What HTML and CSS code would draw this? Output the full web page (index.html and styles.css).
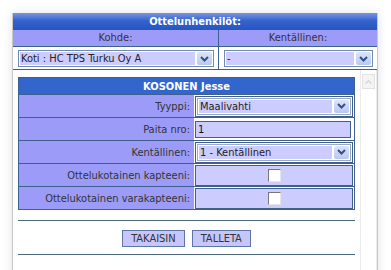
FILE: index.html
```html
<!DOCTYPE html>
<html lang="fi">
<head>
    <meta charset="UTF-8">
    <meta name="viewport" content="width=device-width, initial-scale=1.0">
    <title>Ottelunhenkilöt</title>
    <link rel="stylesheet" href="styles.css">
</head>
<body>
    <div class="window">
        <!-- Kohde ja kentällinen -->
        <div class="top">
            <div class="title">Ottelunhenkilöt:</div>
            <div class="cols labels">
                <div class="col-label sep">Kohde:</div>
                <div class="col-label">Kentällinen:</div>
            </div>
            <div class="cols picks">
                <div class="pick sep">
                    <div class="select">
                        <span class="value">Koti : HC TPS Turku Oy A</span>
                        <span class="arrow"><svg width="9" height="6" viewBox="0 0 9 6"><path d="M1 1 L4.5 4.5 L8 1" fill="none" stroke="#33508a" stroke-width="2"/></svg></span>
                    </div>
                </div>
                <div class="pick">
                    <div class="select">
                        <span class="value">-</span>
                        <span class="arrow"><svg width="9" height="6" viewBox="0 0 9 6"><path d="M1 1 L4.5 4.5 L8 1" fill="none" stroke="#33508a" stroke-width="2"/></svg></span>
                    </div>
                </div>
            </div>
        </div>

        <!-- Pelaajan tiedot -->
        <div class="frame">
            <div class="content">
                <table class="player">
                    <tr><th colspan="2">KOSONEN Jesse</th></tr>
                    <tr>
                        <td class="label">Tyyppi:</td>
                        <td class="value">
                            <div class="boxed">
                                <div class="select">
                                    <span class="value">Maalivahti</span>
                                    <span class="arrow"><svg width="9" height="6" viewBox="0 0 9 6"><path d="M1 1 L4.5 4.5 L8 1" fill="none" stroke="#33508a" stroke-width="2"/></svg></span>
                                </div>
                            </div>
                        </td>
                    </tr>
                    <tr>
                        <td class="label">Paita nro:</td>
                        <td class="value"><div class="input">1</div></td>
                    </tr>
                    <tr>
                        <td class="label">Kentällinen:</td>
                        <td class="value">
                            <div class="boxed">
                                <div class="select">
                                    <span class="value">1 - Kentällinen</span>
                                    <span class="arrow"><svg width="9" height="6" viewBox="0 0 9 6"><path d="M1 1 L4.5 4.5 L8 1" fill="none" stroke="#33508a" stroke-width="2"/></svg></span>
                                </div>
                            </div>
                        </td>
                    </tr>
                    <tr>
                        <td class="label">Ottelukotainen kapteeni:</td>
                        <td class="value"><div class="check-box"><span class="check"></span></div></td>
                    </tr>
                    <tr>
                        <td class="label">Ottelukotainen varakapteeni:</td>
                        <td class="value"><div class="check-box"><span class="check"></span></div></td>
                    </tr>
                </table>
                <div class="buttons">
                    <button type="button">TAKAISIN</button>
                    <button type="button">TALLETA</button>
                </div>
            </div>
            <div class="scrollbar">
                <div class="up"><svg width="7" height="4" viewBox="0 0 7 4"><path d="M0.5 3.5 L3.5 0.8 L6.5 3.5" fill="none" stroke="#d6d6d6" stroke-width="1.4"/></svg></div>
            </div>
        </div>
    </div>
</body>
</html>
```

FILE: styles.css
```css
body {
    margin: 0;
    background-color: #fff;
    font-family: Tahoma, "DejaVu Sans Condensed", "Liberation Sans", sans-serif;
    font-size: 11px;
    color: #333;
}
.window {
    margin: 13px 0 0 12px;
    width: 366px;
    height: 270px;
    border-left: 1px solid #c8c8c8;
    border-right: 1px solid #c8c8c8;
    box-shadow: 0 0 9px rgba(0,0,0,0.12);
    box-sizing: border-box;
}
.title {
    height: 17px;
    line-height: 17px;
    text-align: center;
    font-weight: bold;
    color: #fff;
    background: linear-gradient(#7796e0, #3563cc 45%, #2655c2);
}
.cols {
    display: grid;
    grid-template-columns: 206px 1fr;
}
.labels {
    background-color: #9c9cf8;
    height: 16px;
    line-height: 16px;
    border-bottom: 1px solid #3f5f8c;
}
.col-label {
    text-align: center;
}
.sep {
    border-right: 1px solid #3f5f8c;
}
.picks {
    height: 22px;
    border-bottom: 1px solid #3f5f8c;
}
.pick {
    padding: 3px 4px 0 5px;
}
.select {
    display: flex;
    align-items: center;
    height: 16px;
    border: 1px solid #6f8cb0;
    padding: 1px;
    box-sizing: border-box;
    background-color: #fff;
}
.pick .select {
    height: 17px;
}
.select .value {
    flex: 1;
    height: 100%;
    line-height: 14px;
    padding-left: 3px;
    background-color: #ccccff;
    color: #222;
    white-space: nowrap;
    overflow: hidden;
}
.arrow {
    width: 15px;
    height: 100%;
    margin-left: 2px;
    display: flex;
    align-items: center;
    justify-content: center;
    background: linear-gradient(#dce4f8, #b9c8ef);
    border-radius: 2px;
}
.frame {
    display: flex;
}
.content {
    width: 338px;
    padding: 7px 0 0 5px;
}
.player {
    width: 337px;
    border-collapse: collapse;
    border: 1px solid #3f5f8c;
}
.player th {
    height: 16px;
    padding: 0;
    background-color: #3366cc;
    color: #fff;
    font-weight: bold;
    border-bottom: 1px solid #3f5f8c;
}
.player td {
    padding: 0;
    height: 22px;
    border-bottom: 1px solid #3f5f8c;
}
.label {
    width: 171px;
    background-color: #9c9cf8;
    text-align: right;
    padding-right: 4px !important;
}
.value {
    background-color: #fff;
    padding: 0 1px 0 1px !important;
}
.boxed {
    border: 1px solid #3f5f8c;
    padding: 1px;
    height: 21px;
    box-sizing: border-box;
}
.boxed .select {
    height: 17px;
    border-color: #9aa9c8;
}
.input {
    height: 15px;
    line-height: 15px;
    border: 1px solid #3f5f8c;
    background-color: #ccccff;
    padding-left: 2px;
    color: #111;
    margin-right: 2px;
}
.check-box {
    height: 19px;
    border: 1px solid #3f5f8c;
    background-color: #ccccff;
    display: flex;
    align-items: center;
    justify-content: center;
}
.check {
    width: 11px;
    height: 11px;
    background-color: #fff;
    border-top: 1px solid #777;
    border-left: 1px solid #777;
    border-right: 1px solid #e6e6e6;
    border-bottom: 1px solid #e6e6e6;
}
.buttons {
    margin-top: 10px;
    width: 337px;
    border-top: 1px solid #4d6a7c;
    border-bottom: 1px solid #4d6a7c;
    height: 33px;
    display: flex;
    justify-content: center;
    align-items: center;
    gap: 7px;
}
button {
    font-family: inherit;
    font-size: 11px;
    color: #333;
    background-color: #c6c6fb;
    border: 1px solid #5c74a6;
    height: 17px;
    padding: 0 8px;
    margin-top: 1px;
}
.scrollbar {
    width: 15px;
    margin-left: 5px;
    border-left: 1px solid #ececec;
    border-right: 1px solid #ececec;
    height: 200px;
}
.up {
    margin: 4px 1px 0 1px;
    height: 13px;
    background-color: #f4f4f4;
    border: 1px solid #e2e2e2;
    display: flex;
    align-items: center;
    justify-content: center;
}
```
